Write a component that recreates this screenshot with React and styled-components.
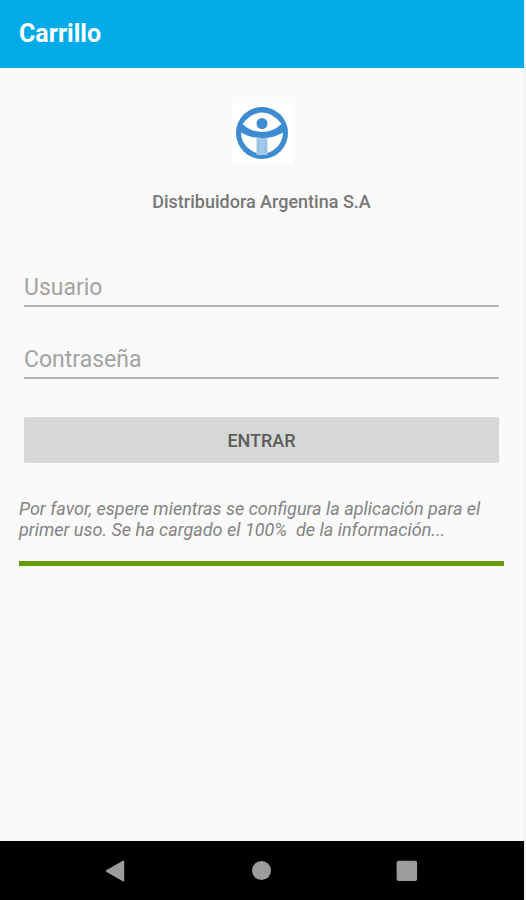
import React from "react";
import styled, { createGlobalStyle } from "styled-components";

const GlobalStyle = createGlobalStyle`
  * { box-sizing: border-box; }
  body { margin: 0; background: #f3f3f3; }
  body, button, input { font-family: Roboto, "Liberation Sans", sans-serif; }
`;

const Screen = styled.div`
  display: flex;
  flex-direction: column;
  min-height: 100vh;
  margin-right: 2px;
  background: #fafafa;
`;

const AppBar = styled.header`
  display: flex;
  align-items: center;
  height: 68px;
  padding: 0 19px;
  background: #00abe8;
`;

const Title = styled.h1`
  margin: 0;
  font-size: 25px;
  line-height: 32px;
  font-weight: 700;
  color: #fff;
`;

const Content = styled.main`
  flex: 1;
  display: flex;
  flex-direction: column;
  padding: 35px 20px 0 19px;
`;

const Logo = styled.svg`
  display: block;
  align-self: center;
  width: 60px;
  height: 60px;
  background: #fff;
`;

const Company = styled.h2`
  margin: 28px 0 0;
  font-size: 18px;
  line-height: 22px;
  font-weight: 500;
  text-align: center;
  color: #777;
`;

const LoginForm = styled.form`
  display: flex;
  flex-direction: column;
  margin-top: 54px;
  padding: 0 5px;
`;

const Field = styled.input`
  width: 100%;
  height: 40px;
  margin: 0 0 32px;
  padding: 3px 0 0;
  border: 0;
  border-bottom: 2px solid #b5b5b5;
  border-radius: 0;
  outline: 0;
  background: transparent;
  font-size: 23px;
  color: #444;

  &::placeholder { color: #a3a3a3; opacity: 1; }
  &:focus { border-bottom-color: #00abe8; }
`;

const SubmitButton = styled.button`
  height: 46px;
  margin-top: 6px;
  border: 0;
  border-radius: 2px;
  background: #d6d8d7;
  font-size: 18px;
  font-weight: 500;
  color: #5c5c5c;
  cursor: pointer;
`;

const Status = styled.p`
  margin: 35px 0 0;
  font-size: 18px;
  line-height: 21px;
  font-style: italic;
  white-space: pre-wrap;
  color: #838383;
`;

const Loading = styled.progress`
  display: block;
  appearance: none;
  width: 100%;
  height: 5px;
  margin-top: 21px;
  border: 0;
  background: #d5e4c0;

  &::-webkit-progress-bar { background: #d5e4c0; }
  &::-webkit-progress-value { background: #669b05; }
  &::-moz-progress-bar { background: #669b05; }
`;

const NavBar = styled.nav`
  display: flex;
  justify-content: center;
  align-items: center;
  gap: 98px;
  height: 59px;
  background: #000;
`;

const NavButton = styled.button`
  display: flex;
  align-items: center;
  justify-content: center;
  width: 48px;
  height: 48px;
  padding: 0;
  border: 0;
  background: transparent;
  color: #9c9c9c;
  cursor: pointer;
`;

const NavIcon = styled.svg`
  display: block;
  width: 24px;
  height: 24px;
  fill: currentColor;
`;

export default function App() {
  return (
    <>
      <GlobalStyle />
      <Screen>
        <AppBar>
          <Title>Carrillo</Title>
        </AppBar>
        <Content>
          <Logo viewBox="0 0 60 60" role="img" aria-label="Distribuidora Argentina">
            <circle cx="30" cy="30" r="26" fill="#3d8bd0" />
            <path d="M10.500 21Q19 9.500 30 9.500Q41 9.500 49.500 21Q41 29 30 29Q19 29 10.500 21Z" fill="#fff" />
            <path d="M9 29.500Q18 35 30 35Q42 35 51 29.500A21 21 0 0 1 9 29.500Z" fill="#fff" />
            <circle cx="30" cy="20.500" r="5.500" fill="#3d8bd0" />
            <rect x="24.500" y="35" width="11" height="17" fill="#a3c7e9" />
            <path d="M26.500 38v12M33.500 38v12" stroke="#8bb7e0" strokeWidth="1" />
          </Logo>
          <Company>Distribuidora Argentina S.A</Company>
          <LoginForm onSubmit={(event) => event.preventDefault()}>
            <Field type="text" name="user" placeholder="Usuario" aria-label="Usuario" autoComplete="username" />
            <Field type="password" name="password" placeholder="Contraseña" aria-label="Contraseña" autoComplete="current-password" />
            <SubmitButton type="submit">ENTRAR</SubmitButton>
          </LoginForm>
          <Status id="status">
            {"Por favor, espere mientras se configura la aplicación para el primer uso. Se ha cargado el 100%  de la información..."}
          </Status>
          <Loading value={100} max={100} aria-labelledby="status" />
        </Content>
        <NavBar>
          <NavButton type="button" aria-label="Atrás">
            <NavIcon viewBox="0 0 24 24"><path d="M2.600 11.100 18.800 1.800Q20.200 1.200 20.200 2.500V21.500Q20.200 22.800 18.800 22.200L2.600 12.900Q1 12 2.600 11.100Z" /></NavIcon>
          </NavButton>
          <NavButton type="button" aria-label="Inicio">
            <NavIcon viewBox="0 0 24 24"><circle cx="11.500" cy="11.500" r="9.500" /></NavIcon>
          </NavButton>
          <NavButton type="button" aria-label="Recientes">
            <NavIcon viewBox="0 0 24 24"><rect x="0.600" y="1.700" width="20.500" height="20.300" rx="2" /></NavIcon>
          </NavButton>
        </NavBar>
      </Screen>
    </>
  );
}
